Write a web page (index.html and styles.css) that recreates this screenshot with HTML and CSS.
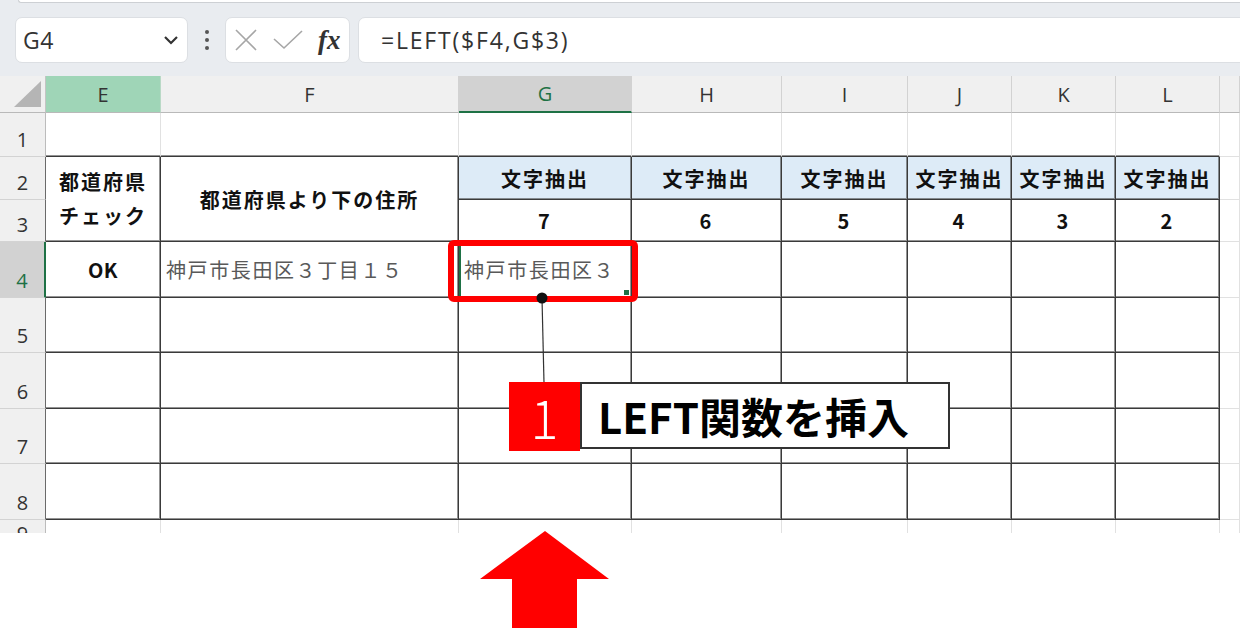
FILE: index.html
```html
<!DOCTYPE html>
<html lang="ja">
<head>
<meta charset="utf-8">
<link rel="stylesheet" href="styles.css">
</head>
<body>
<div class="app">
  <div class="toolbar">
    <div class="topwin"></div>
    <div class="fbar">
      <div class="namebox">
        <span class="nametext">G4</span>
        <svg class="chev" width="16" height="10" viewBox="0 0 16 10"><polyline points="2,2 8,8 14,2" fill="none" stroke="#333" stroke-width="2.2"/></svg>
      </div>
      <div class="dots"><i></i><i></i><i></i></div>
      <div class="fxbox">
        <svg width="22" height="22" viewBox="0 0 22 22"><path d="M1,1 L21,21 M21,1 L1,21" stroke="#a6a6a6" stroke-width="1.6" fill="none"/></svg>
        <svg width="30" height="20" viewBox="0 0 30 20"><polyline points="1,9 11,18 29,1" stroke="#a6a6a6" stroke-width="1.6" fill="none"/></svg>
        <span class="fx">fx</span>
      </div>
      <div class="formula">=LEFT($F4,G$3)</div>
    </div>
  </div>

  <div class="sheet">
    <!-- header row -->
    <div class="c ch corner"><svg width="28" height="27" viewBox="0 0 28 27"><polygon points="27,0 27,26 0,26" fill="#b5b5b5"/></svg></div>
    <div class="c ch che">E</div>
    <div class="c ch">F</div>
    <div class="c ch chsel">G</div>
    <div class="c ch">H</div>
    <div class="c ch">I</div>
    <div class="c ch">J</div>
    <div class="c ch">K</div>
    <div class="c ch">L</div>
    <div class="c ch"></div>

    <!-- row 1 -->
    <div class="c rh">1</div>
    <div class="c tt"></div><div class="c tt"></div><div class="c tt"></div><div class="c tt"></div>
    <div class="c tt"></div><div class="c tt"></div><div class="c tt"></div><div class="c tt"></div>
    <div class="c"></div>

    <!-- row 2 -->
    <div class="c rh tl">2</div>
    <div class="c t span2 hd two">都道府県<br>チェック</div>
    <div class="c t span2 hd">都道府県より下の住所</div>
    <div class="c t blue hd">文字抽出</div>
    <div class="c t blue hd">文字抽出</div>
    <div class="c t blue hd">文字抽出</div>
    <div class="c t blue hd">文字抽出</div>
    <div class="c t blue hd">文字抽出</div>
    <div class="c t blue hd">文字抽出</div>
    <div class="c"></div>

    <!-- row 3 -->
    <div class="c rh tl">3</div>
    <div class="c t hd">7</div>
    <div class="c t hd">6</div>
    <div class="c t hd">5</div>
    <div class="c t hd">4</div>
    <div class="c t hd">3</div>
    <div class="c t hd">2</div>
    <div class="c"></div>

    <!-- row 4 -->
    <div class="c rh rsel">4</div>
    <div class="c t hd ok">OK</div>
    <div class="c t addr">神戸市長田区３丁目１５</div>
    <div class="c t addr active">神戸市長田区３<span class="handle"></span></div>
    <div class="c t"></div><div class="c t"></div><div class="c t"></div><div class="c t"></div><div class="c t"></div>
    <div class="c"></div>

    <!-- row 5 -->
    <div class="c rh tl">5</div>
    <div class="c t"></div><div class="c t"></div><div class="c t"></div><div class="c t"></div>
    <div class="c t"></div><div class="c t"></div><div class="c t"></div><div class="c t"></div>
    <div class="c"></div>

    <!-- row 6 -->
    <div class="c rh tl">6</div>
    <div class="c t"></div><div class="c t"></div><div class="c t"></div><div class="c t"></div>
    <div class="c t"></div><div class="c t"></div><div class="c t"></div><div class="c t"></div>
    <div class="c"></div>

    <!-- row 7 -->
    <div class="c rh tl">7</div>
    <div class="c t"></div><div class="c t"></div><div class="c t"></div><div class="c t"></div>
    <div class="c t"></div><div class="c t"></div><div class="c t"></div><div class="c t"></div>
    <div class="c"></div>

    <!-- row 8 -->
    <div class="c rh tl">8</div>
    <div class="c t"></div><div class="c t"></div><div class="c t"></div><div class="c t"></div>
    <div class="c t"></div><div class="c t"></div><div class="c t"></div><div class="c t"></div>
    <div class="c"></div>

    <!-- row 9 -->
    <div class="c rh rcut">9</div>
    <div class="c"></div><div class="c"></div><div class="c"></div><div class="c"></div>
    <div class="c"></div><div class="c"></div><div class="c"></div><div class="c"></div>
    <div class="c"></div>
  </div>

  <div class="selbox"></div>

  <svg class="overlay" width="1240" height="628" viewBox="0 0 1240 628">
    <line x1="542" y1="298" x2="544" y2="383" stroke="#333" stroke-width="1.2"/>
    <circle cx="542" cy="298" r="5.5" fill="#111"/>
    <polygon points="545,531 609,579 577,579 577,628 512,628 512,579 480,579" fill="#ff0000"/>
  </svg>

  <div class="callout">
    <div class="num">1</div>
    <div class="label">LEFT関数を挿入</div>
  </div>
</div>
</body>
</html>
```

FILE: styles.css
```css
body {
  margin: 0;
  background: #fff;
  font-family: "Noto Sans CJK JP", "Noto Sans", sans-serif;
}

.app {
  position: relative;
  width: 1240px;
  height: 628px;
  overflow: hidden;
  background: #fff;
}

/* ---------- toolbar ---------- */
.toolbar {
  background: #e9ecf0;
  height: 76px;
  overflow: hidden;
}

.topwin {
  height: 2px;
  margin-left: 18px;
  background: #fff;
  border: 1px solid #cdd0d4;
  border-top: none;
  border-right: none;
  border-radius: 0 0 0 6px;
}

.fbar {
  display: flex;
  height: 46px;
  margin-top: 14px;
  padding-left: 15px;
}

.namebox {
  width: 173px;
  box-sizing: border-box;
  background: #fff;
  border: 1px solid #dcdfe3;
  border-radius: 7px;
  display: flex;
  align-items: center;
  justify-content: space-between;
  padding: 0 8px 0 7px;
}

.nametext {
  font-family: "Open Sans", "Liberation Sans", sans-serif;
  font-size: 23px;
  color: #333;
  letter-spacing: 0.5px;
}

.dots {
  width: 37px;
  display: flex;
  flex-direction: column;
  align-items: center;
  justify-content: center;
  gap: 4px;
}

.dots i {
  display: block;
  width: 4px;
  height: 4px;
  border-radius: 50%;
  background: #555;
}

.fxbox {
  width: 125px;
  box-sizing: border-box;
  background: #fff;
  border: 1px solid #dcdfe3;
  border-radius: 7px;
  display: flex;
  align-items: center;
  padding-left: 9px;
  gap: 16px;
}

.fx {
  font-family: "Liberation Serif", serif;
  font-style: italic;
  font-weight: bold;
  font-size: 27px;
  color: #333;
  margin-left: -1px;
  line-height: 1;
}

.formula {
  flex: 1;
  margin-left: 8px;
  margin-right: -12px;
  background: #fff;
  border: 1px solid #dcdfe3;
  border-radius: 7px;
  display: flex;
  align-items: center;
  padding-left: 22px;
  font-family: "Open Sans", "Liberation Sans", sans-serif;
  font-size: 23px;
  letter-spacing: 1.8px;
  color: #333;
}

/* ---------- sheet ---------- */
.sheet {
  display: grid;
  grid-template-columns: 46px 115px 298px 173px 150px 126px 104px 104px 104px 1fr;
  grid-template-rows: 37px 44px 43px 42px 56px 55px 56px 55px 56px 14px;
  height: 457px;
  overflow: hidden;
}

.c {
  box-sizing: border-box;
  border-right: 1px solid #e1e1e1;
  border-bottom: 1px solid #e1e1e1;
  display: flex;
  align-items: center;
  justify-content: center;
  overflow: hidden;
  min-width: 0;
}

.ch {
  background: #f0f0f0;
  border-right-color: #d2d2d2;
  border-bottom-color: #b9b9b9;
  font-family: "Open Sans", "Liberation Sans", sans-serif;
  font-size: 20px;
  color: #333;
}

.corner {
  align-items: flex-end;
  justify-content: flex-end;
  padding: 0 3px 4px 0;
  border-right-color: #c4c4c4;
}

.che {
  background: #9fd5b7;
  border-right-color: #b9d9c6;
}

.chsel {
  background: #d2d2d2;
  color: #1e7145;
  border-bottom: 2px solid #1e7145;
}

.rh {
  background: #f0f0f0;
  border-right-color: #bcbcbc;
  border-bottom-color: #d3d3d3;
  align-items: flex-end;
  padding-bottom: 3px;
  font-family: "Open Sans", "Liberation Sans", sans-serif;
  font-size: 20px;
  line-height: 27px;
  color: #333;
}

.rh.tl {
  border-right-color: #6a6a6a;
}

.rh.rcut {
  align-items: flex-start;
  padding-bottom: 0;
  padding-top: 4px;
  line-height: 20px;
}

.rsel {
  background: #d2d2d2;
  color: #1e7145;
  border-right: 2px solid #1e7145;
}

.tt {
  border-bottom-color: #3a3a3a;
  box-shadow: inset 0 -1px 0 rgba(58, 58, 58, 0.55);
}

.t {
  border-right-color: #3a3a3a;
  border-bottom-color: #3a3a3a;
  box-shadow: inset -1px -1px 0 rgba(58, 58, 58, 0.55);
}

.span2 {
  grid-row: span 2;
}

.blue {
  background: #ddebf7;
}

.hd {
  font-weight: bold;
  font-size: 20px;
  letter-spacing: 2px;
  color: #111;
  text-align: center;
}

.hd.ok {
  letter-spacing: 0.5px;
}

.two {
  line-height: 34px;
}

.addr {
  justify-content: flex-start;
  padding-left: 5px;
  font-size: 20px;
  letter-spacing: 1.6px;
  color: #595959;
  white-space: nowrap;
}

.active {
  position: relative;
  box-shadow: inset -1px -1px 0 rgba(58, 58, 58, 0.55), inset 2px 0 0 #1e7145;
}

.handle {
  position: absolute;
  right: 2px;
  bottom: 2px;
  width: 5px;
  height: 5px;
  background: #1e7145;
}

/* ---------- overlays ---------- */
.selbox {
  position: absolute;
  left: 448px;
  top: 240px;
  width: 190px;
  height: 62px;
  box-sizing: border-box;
  border: 6px solid #ff0000;
  border-radius: 6px;
}

.overlay {
  position: absolute;
  left: 0;
  top: 0;
}

.callout {
  position: absolute;
  left: 509px;
  top: 382px;
  display: flex;
  align-items: flex-start;
}

.num {
  width: 71px;
  height: 69px;
  background: #ff0000;
  color: #fff;
  display: flex;
  align-items: center;
  justify-content: center;
  font-family: "Noto Sans CJK JP", "Noto Sans", sans-serif;
  font-weight: 300;
  font-size: 52px;
  line-height: 1;
}

.label {
  width: 370px;
  height: 67px;
  box-sizing: border-box;
  background: #fff;
  border: 2px solid #333;
  display: flex;
  align-items: center;
  padding-left: 16px;
  font-family: "Noto Sans CJK JP", sans-serif;
  font-weight: bold;
  font-size: 42px;
  color: #000;
  white-space: nowrap;
}
```
